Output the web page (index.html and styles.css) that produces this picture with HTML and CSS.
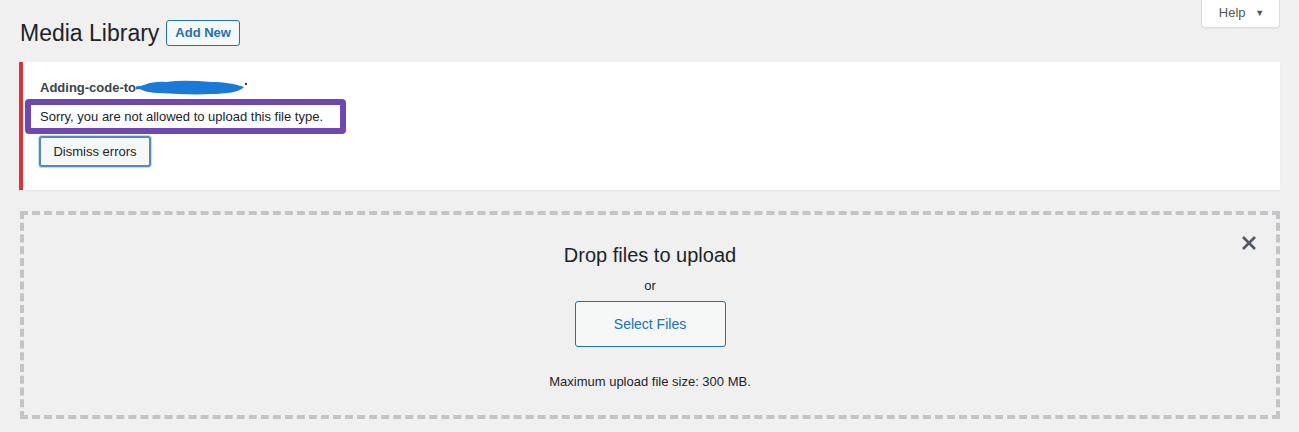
FILE: index.html
```html
<!DOCTYPE html>
<html lang="en">
<head>
    <meta charset="UTF-8">
    <meta name="viewport" content="width=device-width, initial-scale=1.0">
    <title>Media Library</title>
    <link rel="stylesheet" href="styles.css">
</head>
<body>
    <div class="wrap">
        <button class="help-tab">Help <span class="caret">&#9660;</span></button>

        <div class="title-row">
            <h1>Media Library</h1>
            <button class="add-new">Add New</button>
        </div>

        <div class="notice">
            <div class="file-name">Adding-code-to<svg class="scribble" width="112" height="18" viewBox="0 0 112 18"><path d="M2 10 C10 5 20 3 30 4 C45 2 60 3 75 4 C88 4 100 6 108 9 C104 14 90 16 75 16 C60 17 40 16 25 15 C15 15 6 13 2 10 Z" fill="#1b7ad8"/><path d="M0 10 L8 9" stroke="#1b7ad8" stroke-width="3"/><circle cx="110" cy="6" r="1.2" fill="#3a3a3a"/></svg></div>
            <div class="error-box">Sorry, you are not allowed to upload this file type.</div>
            <button class="dismiss">Dismiss errors</button>
        </div>

        <div class="dropzone">
            <button class="close" aria-label="Close">
                <svg width="16" height="16" viewBox="0 0 16 16"><path d="M2 2 L14 14 M14 2 L2 14" stroke="#50575e" stroke-width="2.6"/></svg>
            </button>
            <h2>Drop files to upload</h2>
            <p class="or">or</p>
            <button class="select-files">Select Files</button>
            <p class="max-size">Maximum upload file size: 300 MB.</p>
        </div>
    </div>
</body>
</html>
```

FILE: styles.css
```css
body {
    margin: 0;
    background: #f0f0f1;
    color: #1d2327;
    font-family: "Liberation Sans", Arial, sans-serif;
    font-size: 13px;
}
.wrap {
    padding: 0 19px 0 20px;
}
.help-tab {
    float: right;
    width: 79px;
    height: 29px;
    margin-top: -1px;
    background: #fff;
    border: 1px solid #dcdcde;
    border-top: none;
    border-radius: 0 0 4px 4px;
    box-shadow: 0 1px 1px rgba(0, 0, 0, 0.04);
    color: #50575e;
    font-family: inherit;
    font-size: 13px;
    padding: 0 0 2px 2px;
}
.caret {
    font-size: 9px;
    margin-left: 6px;
    vertical-align: 1px;
}
.title-row {
    display: flex;
    align-items: center;
    gap: 7px;
    padding-top: 19px;
    height: 27px;
}
h1 {
    margin: 0;
    font-size: 23px;
    font-weight: 400;
    line-height: 27px;
    padding-top: 2px;
}
.add-new {
    height: 26px;
    padding: 0 8px;
    border: 1px solid #2271b1;
    border-radius: 3px;
    background: #f6f7f7;
    color: #2271b1;
    font-family: inherit;
    font-size: 13px;
    font-weight: 700;
}
.notice {
    margin: 16px 0 0 -1px;
    height: 128px;
    box-sizing: border-box;
    padding: 15px 0 0 2px;
    background: #fff;
    border-left: 4px solid #d63638;
    box-shadow: 0 1px 1px rgba(0, 0, 0, 0.05);
}
.file-name {
    padding-left: 15px;
    font-weight: 700;
    color: #3c434a;
    height: 21px;
    line-height: 21px;
}
.scribble {
    vertical-align: -4px;
}
.error-box {
    display: inline-block;
    box-sizing: border-box;
    width: 321px;
    height: 35px;
    padding: 0 0 0 9px;
    line-height: 23px;
    border: 6px solid #7047b1;
    border-radius: 4px;
    color: #1d2327;
    margin-top: 1px;
}
.dismiss {
    display: block;
    margin: 2px 0 0 14px;
    width: 112px;
    height: 31px;
    border: 2px solid #4f8cbc;
    border-radius: 3px;
    background: #f6f7f7;
    color: #1d2327;
    font-family: inherit;
    font-size: 13px;
    box-shadow: 0 0 0 1px #c5d9ea;
}
.dropzone {
    position: relative;
    margin-top: 21px;
    height: 208px;
    box-sizing: border-box;
    border: 4px dashed #c3c4c7;
    text-align: center;
    padding-top: 27px;
}
.close {
    position: absolute;
    top: 20px;
    right: 19px;
    border: none;
    background: none;
    padding: 0;
    width: 16px;
    height: 16px;
}
h2 {
    margin: 0;
    font-size: 20px;
    font-weight: 400;
    line-height: 26px;
}
.or {
    margin: 8px 0 0;
    line-height: 20px;
}
.select-files {
    margin-top: 5px;
    width: 151px;
    height: 46px;
    border: 1px solid #2271b1;
    border-radius: 3px;
    background: #f6f7f7;
    color: #2271b1;
    font-family: inherit;
    font-size: 14px;
}
.max-size {
    margin: 27px 0 0;
    line-height: 16px;
    color: #1d2327;
}
```
